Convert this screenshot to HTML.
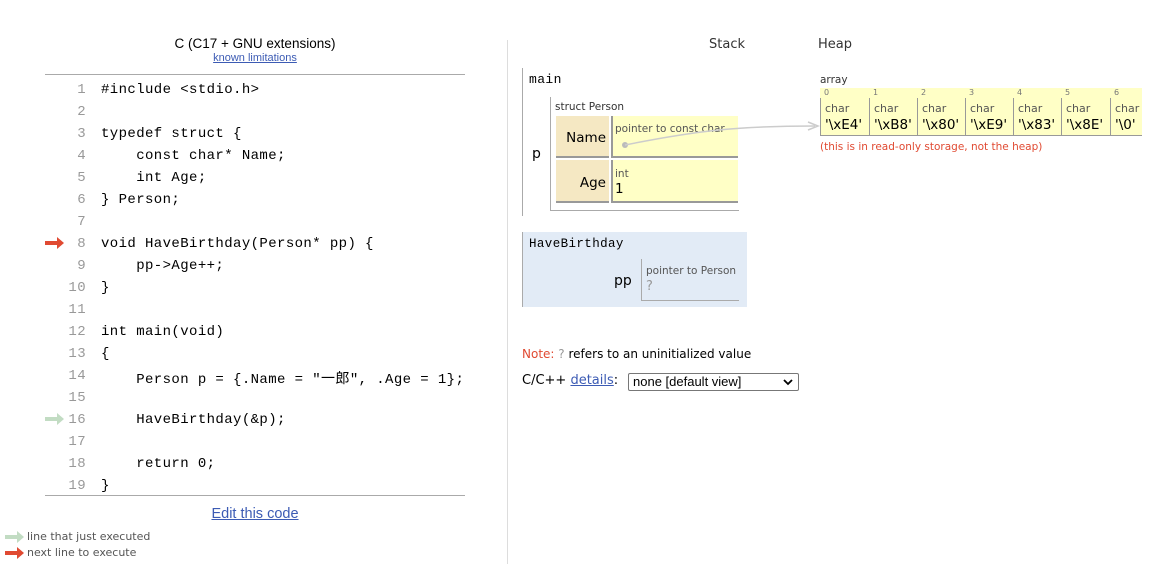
<!DOCTYPE html>
<html><head><meta charset="utf-8"><style>
*{margin:0;padding:0;box-sizing:border-box}
body{width:1149px;height:564px;background:#fff;position:relative;overflow:hidden;font-family:"DejaVu Sans","Liberation Sans",sans-serif;color:#000}
.a{position:absolute;white-space:pre}
.code{font-family:"Liberation Mono","Noto Sans CJK JP",monospace;font-size:14px;letter-spacing:0.4px}
.ln{color:#999;text-align:right;width:40px;left:46px}
.src{left:101px}
.v{font-family:"DejaVu Sans",sans-serif}
.small{font-size:10.5px;color:#555}
</style></head><body>
<div class="a" style="left:0;width:510px;top:36px;text-align:center;font-family:'Liberation Sans',sans-serif;font-size:13.5px">C (C17 + GNU extensions)</div>
<div class="a" style="left:0;width:510px;top:52px;text-align:center;font-family:'Liberation Sans',sans-serif;font-size:11px;color:#3c5bb4;text-decoration:underline">known limitations</div>
<div class="a" style="left:45px;top:74px;width:420px;height:1px;background:#aaa"></div>
<div class="a" style="left:45px;top:495px;width:420px;height:1px;background:#aaa"></div>

<div id="code"></div>

<svg class="a" style="left:45px;top:236px" width="20" height="14"><path d="M0 5h12V1l7 6-7 6V9H0z" fill="#e04a32"/></svg>
<svg class="a" style="left:45px;top:412px" width="20" height="14"><path d="M0 5h12V1l7 6-7 6V9H0z" fill="#c2dcc3"/></svg>

<div class="a" style="left:0;width:510px;top:506px;text-align:center;font-family:'Liberation Sans',sans-serif;font-size:14.5px;color:#3c5bb4;text-decoration:underline">Edit this code</div>
<svg class="a" style="left:5px;top:530px" width="20" height="14"><path d="M0 5h12V1l7 6-7 6V9H0z" fill="#c2dcc3"/></svg>
<svg class="a" style="left:5px;top:546px" width="20" height="14"><path d="M0 5h12V1l7 6-7 6V9H0z" fill="#e04a32"/></svg>
<div class="a v" style="left:27px;top:530px;font-size:11px;color:#555">line that just executed</div>
<div class="a v" style="left:27px;top:546px;font-size:11px;color:#555">next line to execute</div>

<div class="a" style="left:507px;top:40px;width:1px;height:524px;background:#ddd"></div>

<div class="a v" style="left:709px;top:37px;font-size:13px;color:#333">Stack</div>
<div class="a v" style="left:818px;top:37px;font-size:13px;color:#333">Heap</div>

<div class="a" style="left:522px;top:68px;width:1px;height:148px;background:#aaa"></div>
<div class="a code" style="left:529px;top:72px;font-size:13px">main</div>
<div class="a v" style="left:532px;top:146px;font-size:14px">p</div>
<div class="a" style="left:550px;top:97px;width:189px;height:114px;border-left:1px solid #aaa;border-bottom:1px solid #aaa"></div>
<div class="a v small" style="left:555px;top:101px;color:#333">struct Person</div>
<div class="a" style="left:556px;top:116px;width:53px;height:42px;background:#f5e8c3;border-bottom:2px solid #999"></div>
<div class="a" style="left:611px;top:116px;width:127px;height:42px;background:#ffffc6;border-left:2px solid #999;border-bottom:2px solid #999"></div>
<div class="a" style="left:556px;top:160px;width:53px;height:43px;background:#f5e8c3;border-bottom:2px solid #999"></div>
<div class="a" style="left:611px;top:160px;width:127px;height:43px;background:#ffffc6;border-left:2px solid #999;border-bottom:2px solid #999"></div>
<div class="a v" style="left:556px;width:50px;text-align:right;top:130px;font-size:13.5px">Name</div>
<div class="a v" style="left:556px;width:50px;text-align:right;top:175px;font-size:13.5px">Age</div>
<div class="a v small" style="left:615px;top:123px">pointer to const char</div>
<div class="a v small" style="left:615px;top:168px">int</div>
<div class="a v" style="left:615px;top:181px;font-size:13.5px">1</div>

<div class="a v" style="left:820px;top:74px;font-size:10.5px;color:#333">array</div>
<div class="a" style="left:820px;top:88px;width:322px;height:48px;background:#ffffc6;border-bottom:1px solid #999"></div>
<div id="arr"></div>
<div class="a v" style="left:820px;top:141px;font-size:10.5px;color:#e04a32">(this is in read-only storage, not the heap)</div>

<svg class="a" style="left:0;top:0" width="1149" height="564">
<circle cx="625" cy="145" r="3" fill="#bbb"/>
<path d="M625 145 C 700 130, 740 126, 815 126" stroke="#ccc" stroke-width="1.5" fill="none"/>
<path d="M808 122 L818 126 L808 130" stroke="#ccc" stroke-width="1.5" fill="none"/>
</svg>

<div class="a" style="left:522px;top:232px;width:225px;height:75px;background:#e2ebf6;border-left:1px solid #aaa"></div>
<div class="a code" style="left:529px;top:237px;font-size:12.5px">HaveBirthday</div>
<div class="a v" style="left:614px;top:273px;font-size:14px">pp</div>
<div class="a" style="left:641px;top:259px;width:98px;height:42px;border-left:1px solid #aaa;border-bottom:1px solid #aaa"></div>
<div class="a v small" style="left:646px;top:265px">pointer to Person</div>
<div class="a v" style="left:646px;top:279px;font-size:13px;color:#999">?</div>

<div class="a v" style="left:522px;top:347px;font-size:12px"><span style="color:#e04a32">Note:</span> <span style="color:#999">?</span> refers to an uninitialized value</div>
<div class="a v" style="left:522px;top:373px;font-size:13px">C/C++ <span style="color:#3c5bb4;text-decoration:underline">details</span>:</div>
<div class="a" style="left:628px;top:373px;width:171px;height:18px;border:1px solid #777;border-radius:2px;font-family:'Liberation Sans',sans-serif;font-size:13px;padding:0 0 0 4px;line-height:16px">none [default view]<svg style="position:absolute;right:5px;top:5px" width="10" height="7"><path d="M1 1l4 4 4-4" stroke="#000" stroke-width="1.8" fill="none"/></svg></div>

<script>
var lines=["#include <stdio.h>","","typedef struct {","    const char* Name;","    int Age;","} Person;","","void HaveBirthday(Person* pp) {","    pp->Age++;","}","","int main(void)","{","    Person p = {.Name = \"一郎\", .Age = 1};","","    HaveBirthday(&p);","","    return 0;","}"];
var h="";
lines.forEach(function(l,i){var t=82+i*22;
h+='<div class="a code ln" style="top:'+t+'px">'+(i+1)+'</div>';
h+='<div class="a code src" style="top:'+t+'px">'+l.replace(/&/g,"&amp;").replace(/</g,"&lt;").replace(/>/g,"&gt;")+'</div>';});
document.getElementById("code").innerHTML=h;
var xs=[820,869,917,965,1013,1061,1110],vals=["'\\xE4'","'\\xB8'","'\\x80'","'\\xE9'","'\\x83'","'\\x8E'","'\\0'"],a="";
xs.forEach(function(x,i){
a+='<div class="a v" style="left:'+(x+4)+'px;top:88px;font-size:8px;color:#777">'+i+'</div>';
a+='<div class="a" style="left:'+x+'px;top:98px;width:1px;height:38px;background:#999"></div>';
a+='<div class="a v small" style="left:'+(x+5)+'px;top:102px;font-size:11px">char</div>';
a+='<div class="a v" style="left:'+(x+5)+'px;top:117px;font-size:13.5px">'+vals[i]+'</div>';});
document.getElementById("arr").innerHTML=a;
</script>
</body></html>
